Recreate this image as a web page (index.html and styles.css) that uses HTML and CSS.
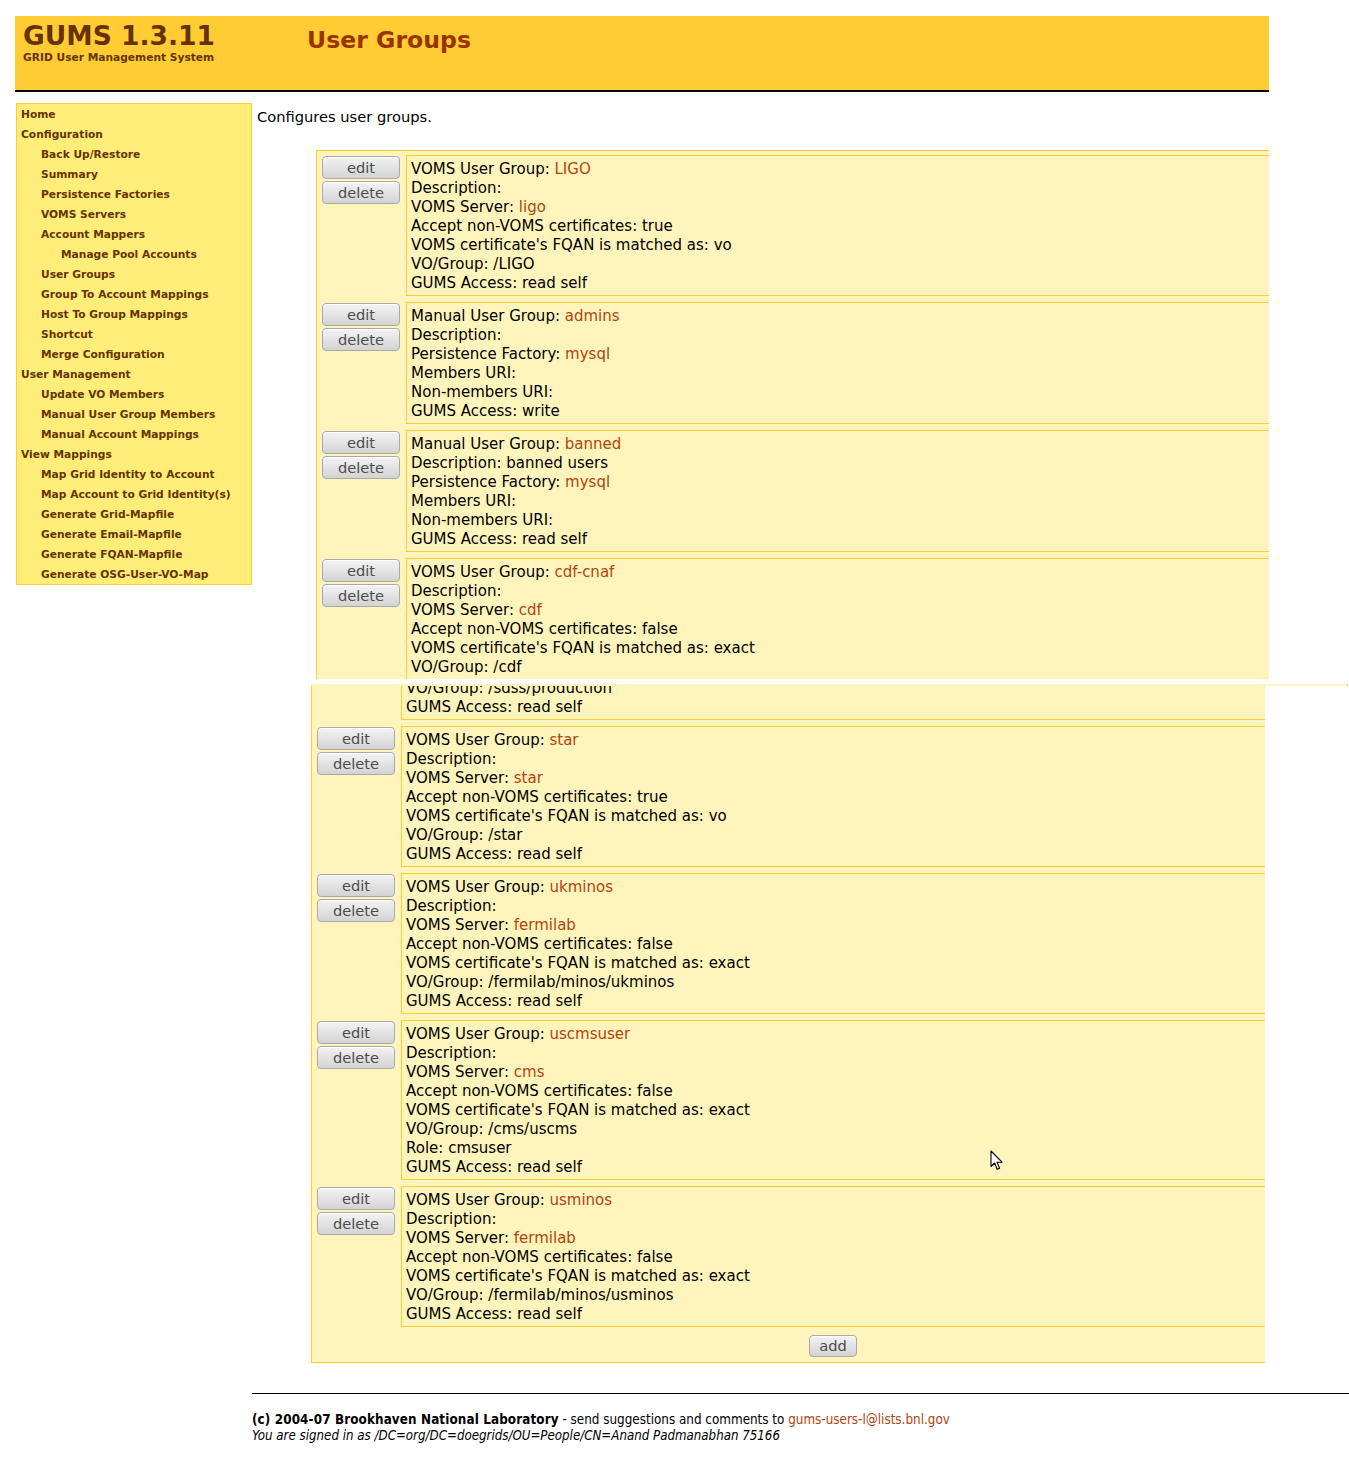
FILE: index.html
```html
<!DOCTYPE html>
<html>
<head>
<meta charset="utf-8">
<title>GUMS - User Groups</title>
<link rel="stylesheet" href="styles.css">
</head>
<body>
<div class="shot-top">
  <header class="masthead">
    <div class="brand">
      <div class="brand-name">GUMS 1.3.11</div>
      <div class="brand-sub">GRID User Management System</div>
    </div>
    <h1 class="page-title">User Groups</h1>
  </header>
  <div class="layout">
    <nav class="sidebar">
      <ul>
        <li class="l1">Home</li>
        <li class="l1">Configuration</li>
        <li class="l2">Back Up/Restore</li>
        <li class="l2">Summary</li>
        <li class="l2">Persistence Factories</li>
        <li class="l2">VOMS Servers</li>
        <li class="l2">Account Mappers</li>
        <li class="l3">Manage Pool Accounts</li>
        <li class="l2">User Groups</li>
        <li class="l2">Group To Account Mappings</li>
        <li class="l2">Host To Group Mappings</li>
        <li class="l2">Shortcut</li>
        <li class="l2">Merge Configuration</li>
        <li class="l1">User Management</li>
        <li class="l2">Update VO Members</li>
        <li class="l2">Manual User Group Members</li>
        <li class="l2">Manual Account Mappings</li>
        <li class="l1">View Mappings</li>
        <li class="l2">Map Grid Identity to Account</li>
        <li class="l2">Map Account to Grid Identity(s)</li>
        <li class="l2">Generate Grid-Mapfile</li>
        <li class="l2">Generate Email-Mapfile</li>
        <li class="l2">Generate FQAN-Mapfile</li>
        <li class="l2 last">Generate OSG-User-VO-Map</li>
      </ul>
    </nav>
    <main class="content">
      <p class="intro">Configures user groups.</p>
      <div class="clip clip-top">
        <div class="groups">
          <div class="row">
            <div class="actions"><button class="btn">edit</button><button class="btn">delete</button></div>
            <div class="info">
              <div>VOMS User Group: <a>LIGO</a></div>
              <div>Description: </div>
              <div>VOMS Server: <a>ligo</a></div>
              <div>Accept non-VOMS certificates: true</div>
              <div>VOMS certificate's FQAN is matched as: vo</div>
              <div>VO/Group: /LIGO</div>
              <div>GUMS Access: read self</div>
            </div>
          </div>
          <div class="row">
            <div class="actions"><button class="btn">edit</button><button class="btn">delete</button></div>
            <div class="info">
              <div>Manual User Group: <a>admins</a></div>
              <div>Description: </div>
              <div>Persistence Factory: <a>mysql</a></div>
              <div>Members URI: </div>
              <div>Non-members URI: </div>
              <div>GUMS Access: write</div>
            </div>
          </div>
          <div class="row">
            <div class="actions"><button class="btn">edit</button><button class="btn">delete</button></div>
            <div class="info">
              <div>Manual User Group: <a>banned</a></div>
              <div>Description: banned users</div>
              <div>Persistence Factory: <a>mysql</a></div>
              <div>Members URI: </div>
              <div>Non-members URI: </div>
              <div>GUMS Access: read self</div>
            </div>
          </div>
          <div class="row">
            <div class="actions"><button class="btn">edit</button><button class="btn">delete</button></div>
            <div class="info">
              <div>VOMS User Group: <a>cdf-cnaf</a></div>
              <div>Description: </div>
              <div>VOMS Server: <a>cdf</a></div>
              <div>Accept non-VOMS certificates: false</div>
              <div>VOMS certificate's FQAN is matched as: exact</div>
              <div>VO/Group: /cdf</div>
              <div>GUMS Access: read self</div>
            </div>
          </div>
        </div>
      </div>
    </main>
  </div>
</div>

<div class="seam"></div>
<div class="seam-strip"></div>

<div class="shot-bottom">
  <div class="clip clip-bottom">
    <div class="groups groups-cont">
      <div class="row row-cut">
        <div class="actions"><button class="btn">edit</button><button class="btn">delete</button></div>
        <div class="info">
          <div>VOMS User Group: <a>sdss</a></div>
          <div>Description: </div>
          <div>VOMS Server: <a>sdss</a></div>
          <div>Accept non-VOMS certificates: false</div>
          <div>VOMS certificate's FQAN is matched as: exact</div>
          <div>VO/Group: /sdss/production</div>
          <div>GUMS Access: read self</div>
        </div>
      </div>
      <div class="row">
        <div class="actions"><button class="btn">edit</button><button class="btn">delete</button></div>
        <div class="info">
          <div>VOMS User Group: <a>star</a></div>
          <div>Description: </div>
          <div>VOMS Server: <a>star</a></div>
          <div>Accept non-VOMS certificates: true</div>
          <div>VOMS certificate's FQAN is matched as: vo</div>
          <div>VO/Group: /star</div>
          <div>GUMS Access: read self</div>
        </div>
      </div>
      <div class="row">
        <div class="actions"><button class="btn">edit</button><button class="btn">delete</button></div>
        <div class="info">
          <div>VOMS User Group: <a>ukminos</a></div>
          <div>Description: </div>
          <div>VOMS Server: <a>fermilab</a></div>
          <div>Accept non-VOMS certificates: false</div>
          <div>VOMS certificate's FQAN is matched as: exact</div>
          <div>VO/Group: /fermilab/minos/ukminos</div>
          <div>GUMS Access: read self</div>
        </div>
      </div>
      <div class="row">
        <div class="actions"><button class="btn">edit</button><button class="btn">delete</button></div>
        <div class="info">
          <div>VOMS User Group: <a>uscmsuser</a></div>
          <div>Description: </div>
          <div>VOMS Server: <a>cms</a></div>
          <div>Accept non-VOMS certificates: false</div>
          <div>VOMS certificate's FQAN is matched as: exact</div>
          <div>VO/Group: /cms/uscms</div>
          <div>Role: cmsuser</div>
          <div>GUMS Access: read self</div>
        </div>
      </div>
      <div class="row">
        <div class="actions"><button class="btn">edit</button><button class="btn">delete</button></div>
        <div class="info">
          <div>VOMS User Group: <a>usminos</a></div>
          <div>Description: </div>
          <div>VOMS Server: <a>fermilab</a></div>
          <div>Accept non-VOMS certificates: false</div>
          <div>VOMS certificate's FQAN is matched as: exact</div>
          <div>VO/Group: /fermilab/minos/usminos</div>
          <div>GUMS Access: read self</div>
        </div>
      </div>
      <div class="add-row"><button class="btn btn-add">add</button></div>
    </div>
  </div>
  <footer class="footer">
    <div><b>(c) 2004-07 Brookhaven National Laboratory</b> - send suggestions and comments to <a>gums-users-l@lists.bnl.gov</a></div>
    <div class="signed">You are signed in as /DC=org/DC=doegrids/OU=People/CN=Anand Padmanabhan 75166</div>
  </footer>
</div>

<svg class="cursor" width="14" height="22" viewBox="0 0 14 22">
  <path d="M1 1 L1 16.5 L4.6 13 L7.2 19.2 L9.6 18.2 L7 12.2 L12 12.2 Z" fill="#fff" stroke="#000" stroke-width="1.1" stroke-linejoin="round"/>
</svg>
</body>
</html>
```

FILE: styles.css
```css
html, body {
  margin: 0;
  padding: 0;
  background: #fff;
}
body {
  position: relative;
  font-family: "DejaVu Sans", Verdana, sans-serif;
  font-size: 14.667px;
  color: #000;
  width: 1349px;
  min-height: 1473px;
}

/* ---------- top half ---------- */
.shot-top {
  width: 1269px;
  height: 679px;
  overflow: hidden;
}
.masthead {
  margin: 16px 0 0 15px;
  height: 74px;
  background: #ffcc33;
  border-bottom: 2px solid #000;
  display: flex;
  align-items: flex-start;
}
.brand {
  width: 284px;
  padding: 4px 0 0 8px;
}
.brand-name {
  font-weight: bold;
  font-size: 26.5px;
  color: #663300;
  line-height: 31px;
}
.brand-sub {
  font-weight: bold;
  font-size: 10.667px;
  color: #663300;
  line-height: 13px;
}
.page-title {
  margin: 9px 0 0 0;
  font-weight: bold;
  font-size: 23.6px;
  line-height: 30px;
  color: #993300;
}

.layout {
  display: flex;
  align-items: flex-start;
  margin-top: 11px;
}
.sidebar {
  margin-left: 16px;
  width: 234px;
  background: #ffed7a;
  border: 1px solid #ffcc33;
}
.sidebar ul {
  list-style: none;
  margin: 0;
  padding: 1px 0 0 0;
}
.sidebar li {
  font-weight: bold;
  font-size: 10.667px;
  line-height: 20px;
  color: #663300;
  white-space: nowrap;
}
.sidebar li.last {
  line-height: 19px;
}
.sidebar .l1 { padding-left: 4px; }
.sidebar .l2 { padding-left: 24px; }
.sidebar .l3 { padding-left: 44px; }

.content {
  margin-left: 5px;
  flex: 1;
}
.intro {
  margin: 4px 0 24px 0;
  line-height: 19px;
}

/* ---------- group list ---------- */
.clip {
  overflow: hidden;
}
.clip-top {
  margin-left: 59px;
  width: 953px;
}
.groups {
  box-sizing: border-box;
  width: 1044px;
  background: #fff5bc;
  border: 1px solid #ffcc33;
  padding: 4px 5px;
  display: flex;
  flex-direction: column;
  gap: 6px;
}
.row {
  display: flex;
  gap: 6px;
  align-items: stretch;
}
.actions {
  width: 78px;
  flex: none;
  display: flex;
  flex-direction: column;
  gap: 2px;
  padding-top: 1px;
}
.btn {
  box-sizing: border-box;
  height: 23px;
  padding: 0;
  border: 1px solid #a9a9a9;
  border-radius: 4px;
  background: linear-gradient(#f3f3f3, #d3d3d3);
  box-shadow: inset 0 1px 0 #fff;
  color: #4d4d4d;
  font-family: "DejaVu Sans", Verdana, sans-serif;
  font-size: 14.667px;
  line-height: 20px;
  text-align: center;
}
.actions .btn {
  width: 78px;
}
.info {
  flex: 1;
  border: 1px solid #ffcc33;
  padding: 4px 4px 2px 4px;
  font-size: 15px;
  line-height: 19px;
  white-space: nowrap;
}
.info a, .footer a {
  color: #b3430f;
  text-decoration: none;
}

/* ---------- seam between the two captures ---------- */
.seam {
  height: 5px;
}
.seam-strip {
  margin-left: 311px;
  width: 1036px;
  height: 2px;
  background: #fff5bc;
  border-right: 1px solid #ffcc33;
}

/* ---------- bottom half ---------- */
.shot-bottom {
  padding-left: 252px;
}
.clip-bottom {
  margin-left: 59px;
  width: 954px;
}
.groups-cont {
  border-top: none;
  padding-top: 0;
  padding-bottom: 5px;
}
.row-cut {
  margin-top: -107px;
}
.add-row {
  padding-top: 2px;
  text-align: center;
}
.btn-add {
  width: 48px;
  height: 22px;
}

.footer {
  margin-top: 30px;
  width: 1097px;
  border-top: 1px solid #000;
  padding-top: 18px;
  font-family: "DejaVu Sans Condensed", "DejaVu Sans", sans-serif;
  font-stretch: condensed;
  font-size: 13.333px;
  line-height: 16px;
}
.footer b {
  letter-spacing: 0.12px;
}
.signed {
  font-style: italic;
  font-size: 13.2px;
}

.cursor {
  position: absolute;
  left: 990px;
  top: 1150px;
}
```
